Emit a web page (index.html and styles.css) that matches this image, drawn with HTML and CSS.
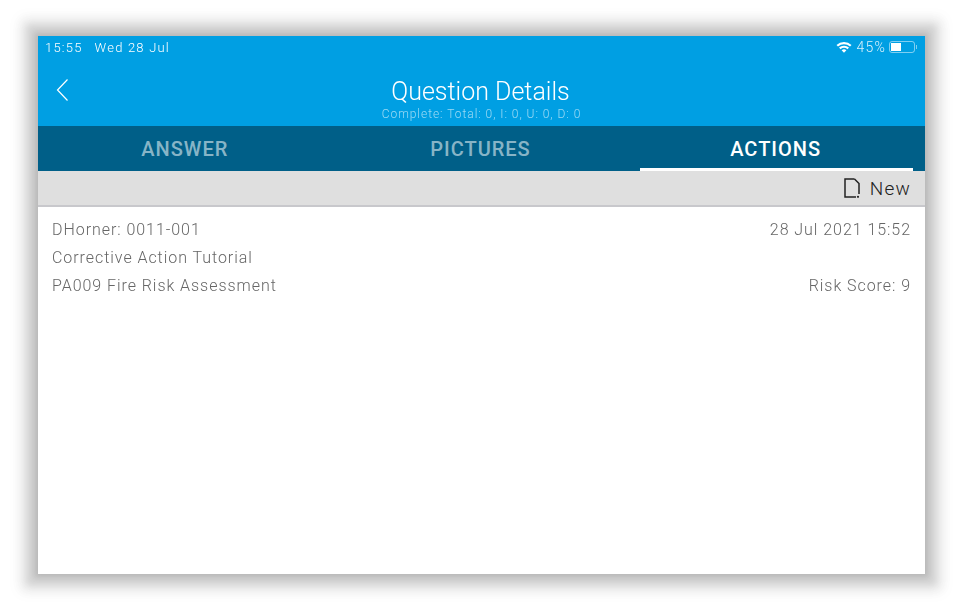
FILE: index.html
```html
<!DOCTYPE html>
<html>
<head>
    <title>Question Details</title>
    <link rel="stylesheet" href="styles.css">
</head>
<body>
    <div class="screen">
        <div class="status-bar">
            <div class="status-left">
                <span>15:55</span>
                <span>Wed 28 Jul</span>
            </div>
            <div class="status-right">
                <svg class="wifi" width="16" height="12" viewBox="0 0 16 12">
                    <path d="M0.5 4 A11 11 0 0 1 15.5 4 L14 5.6 A9 9 0 0 0 2 5.6 Z" fill="#fff"/>
                    <path d="M3 6.6 A7.5 7.5 0 0 1 13 6.6 L11.5 8.2 A5.5 5.5 0 0 0 4.5 8.2 Z" fill="#fff"/>
                    <path d="M5.6 9.2 A3.6 3.6 0 0 1 10.4 9.2 L8 11.8 Z" fill="#fff"/>
                </svg>
                <span class="pct">45%</span>
                <div class="battery"><div class="battery-fill"></div></div>
                <div class="battery-tip"></div>
            </div>
        </div>
        <div class="nav-bar">
            <svg class="back" width="13" height="22" viewBox="0 0 13 22">
                <path d="M11.5 0.5 L1.5 11 L11.5 21.5" fill="none" stroke="#fff" stroke-width="1.2"/>
            </svg>
            <div class="title">Question Details</div>
            <div class="subtitle">Complete: Total: 0, I: 0, U: 0, D: 0</div>
        </div>
        <div class="tabs">
            <div class="tab">ANSWER</div>
            <div class="tab">PICTURES</div>
            <div class="tab active">ACTIONS</div>
        </div>
        <div class="toolbar">
            <svg class="doc" width="16" height="20" viewBox="0 0 16 20">
                <path d="M10.5 1 H1 V19 H12 M10.5 1 L15 5.5 V16" fill="none" stroke="#222" stroke-width="1.5"/>
                <circle cx="14" cy="18.8" r="1.1" fill="#222"/>
            </svg>
            <span class="new">New</span>
        </div>
        <div class="action-item">
            <div class="row"><span>DHorner: 0011-001</span><span>28 Jul 2021 15:52</span></div>
            <div class="row"><span>Corrective Action Tutorial</span></div>
            <div class="row"><span>PA009 Fire Risk Assessment</span><span>Risk Score: 9</span></div>
        </div>
    </div>
</body>
</html>
```

FILE: styles.css
```css
html, body {
    height: 100%;
}
body {
    margin: 0;
    padding: 36px 33px 0 38px;
    box-sizing: border-box;
    background: #fff;
    font-family: Roboto, Arial, sans-serif;
    overflow: hidden;
}
.screen {
    height: 538px;
    background: #fff;
    box-shadow: 0 0 5px 3px #b9b9b9, 0 0 7px 10px #d0d0d0, 0 0 10px 15px #e3e3e3, 0 0 14px 19px #f6f6f6;
}
.status-bar {
    height: 22px;
    padding: 0 8px 0 7px;
    background: #009fe3;
    color: #fff;
    font-size: 13px;
    font-weight: 300;
    letter-spacing: 1.2px;
    display: flex;
    justify-content: space-between;
    align-items: center;
}
.status-left {
    display: flex;
    gap: 12px;
    filter: blur(0.4px);
}
.status-right {
    display: flex;
    align-items: center;
    gap: 3px;
    filter: blur(0.3px);
}
.pct {
    font-size: 14px;
    opacity: 0.85;
    margin-left: 2px;
}
.battery {
    width: 26px;
    height: 12px;
    padding: 1px;
    box-sizing: border-box;
    border: 1px solid rgba(255, 255, 255, 0.5);
    border-radius: 3px;
}
.battery-fill {
    width: 10px;
    height: 100%;
    background: #fff;
}
.battery-tip {
    width: 1px;
    height: 4px;
    margin-left: -2px;
    background: rgba(255, 255, 255, 0.5);
}
.nav-bar {
    position: relative;
    height: 68px;
    background: #009fe3;
    color: #fff;
    text-align: center;
}
.back {
    position: absolute;
    left: 18px;
    top: 21px;
}
.title {
    padding-top: 20px;
    padding-right: 2px;
    font-size: 25px;
    font-weight: 300;
    line-height: 28px;
    filter: blur(0.3px);
}
.subtitle {
    font-size: 12px;
    font-weight: 300;
    letter-spacing: 0.95px;
    line-height: 12px;
    margin-top: 2px;
    opacity: 0.6;
    filter: blur(0.4px);
}
.tabs {
    height: 45px;
    background: #005f88;
    display: grid;
    grid-template-columns: repeat(3, 1fr);
}
.tab {
    box-sizing: border-box;
    padding-top: 11px;
    padding-right: 2px;
    text-align: center;
    font-size: 20px;
    font-weight: 500;
    letter-spacing: 1px;
    line-height: 24px;
    color: rgba(255, 255, 255, 0.55);
}
.tab.active {
    color: #fff;
    margin: 0 12px 0 11px;
    border-bottom: 3px solid #fff;
}
.toolbar {
    height: 36px;
    box-sizing: border-box;
    padding-right: 14px;
    background: #dfdfdf;
    border-bottom: 2px solid #c8c8cc;
    display: flex;
    justify-content: flex-end;
    align-items: center;
    gap: 10px;
}
.new {
    font-size: 19px;
    font-weight: 300;
    letter-spacing: 1.2px;
    color: #222;
}
.action-item {
    padding: 9px 14px 0 14px;
    font-size: 16px;
    font-weight: 300;
    letter-spacing: 0.95px;
    color: #666;
}
.row {
    height: 28px;
    line-height: 28px;
    display: flex;
    justify-content: space-between;
    filter: blur(0.5px);
}
```
